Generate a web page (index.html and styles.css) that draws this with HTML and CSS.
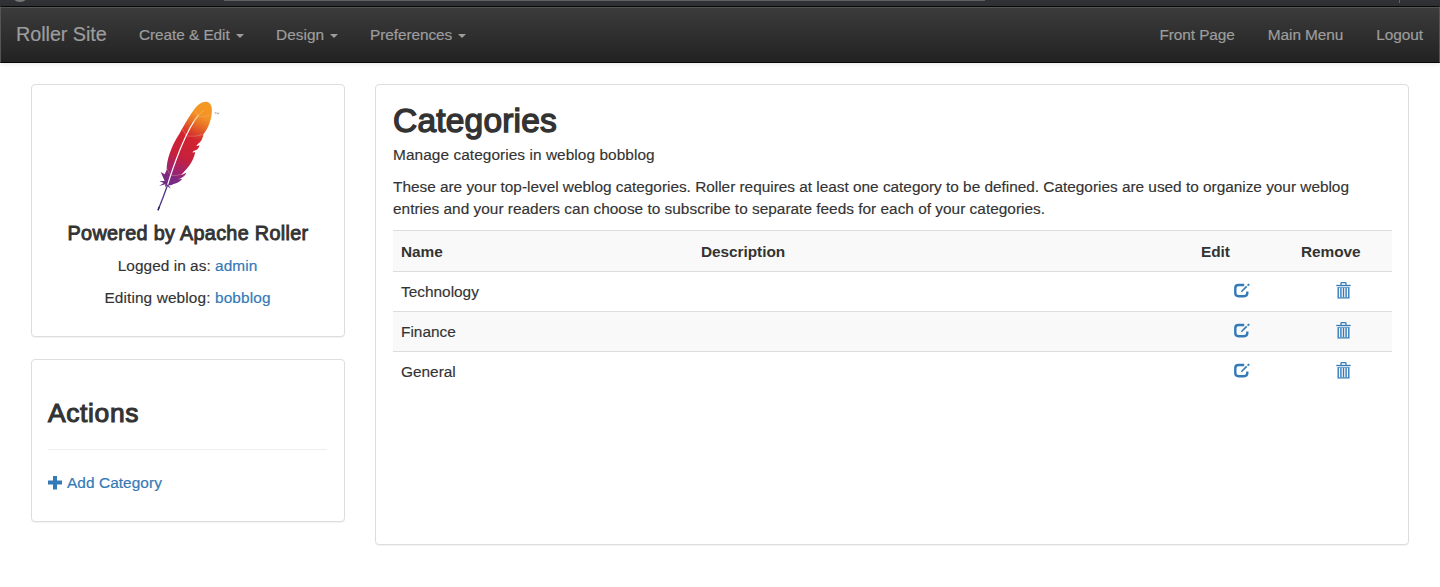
FILE: index.html
```html
<!DOCTYPE html>
<html lang="en">
<head>
<meta charset="utf-8">
<title>Roller Site</title>
<link rel="stylesheet" href="styles.css">
</head>
<body>
<svg class="defs" width="0" height="0" aria-hidden="true">
  <symbol id="edit" viewBox="0 0 16 15">
    <path d="M10.200 2H4.500Q1.300 2 1.300 5V10Q1.300 13.200 4.500 13.200H10Q13.300 13.200 13.300 10V8.400" fill="none" stroke="currentColor" stroke-width="2.400"/>
    <path d="M6.700 9.600 7.500 7.400 12.100 2.800 13.300 4 8.700 8.600ZM13 1.900 14.200.7Q15.800.5 15.600 2.100L14.300 3.200Z" fill="currentColor"/>
  </symbol>
  <symbol id="trash" viewBox="0 0 15 17">
    <path d="M5 3V1.200Q5 .6 5.600.6H9.400Q10 .6 10 1.200V3" fill="none" stroke="currentColor" stroke-width="1.200"/>
    <path d="M.3 3.500H14.700" stroke="currentColor" stroke-width="1.300"/>
    <path d="M1.600 5.400H13.400" stroke="currentColor" stroke-width="1" opacity=".75"/>
    <path d="M2.200 5.500V15.900H12.800V5.500M4.900 6V15M7.500 6V15M10.100 6V15" fill="none" stroke="currentColor" stroke-width="1.400"/>
  </symbol>
</svg>
<div class="chrome"><span class="knob"></span><span class="address"></span><span class="tick"></span></div>
<nav class="navbar">
  <a class="brand">Roller Site</a>
  <a class="n1">Create &amp; Edit<i class="caret"></i></a>
  <a class="n2">Design<i class="caret"></i></a>
  <a class="n3">Preferences<i class="caret"></i></a>
  <span class="right"><a>Front Page</a><a>Main Menu</a><a>Logout</a></span>
</nav>
<main class="layout">
  <aside class="side">
    <section class="card about">
      <svg class="feather" viewBox="-6 0 270 375">
        <defs><linearGradient id="plume" gradientUnits="userSpaceOnUse" x1="190" y1="38" x2="70" y2="290">
          <stop offset="0" stop-color="#f69923"/><stop offset=".16" stop-color="#f39324"/><stop offset=".27" stop-color="#e66a27"/><stop offset=".42" stop-color="#d2242f"/><stop offset=".65" stop-color="#c6203c"/><stop offset=".8" stop-color="#a4226a"/><stop offset=".9" stop-color="#7e2a82"/><stop offset="1" stop-color="#6d2c83"/>
        </linearGradient></defs>
        <path fill="url(#plume)" d="M181 35C198 34 203 53 200 72C198 91 189 118 174 134L175 134C174 139 176 136 173 142C171 150 166 157 159 161L154 168C160 168 165 164 163 169C160 177 154 182 147 182L142 187C149 188 152 184 150 190C145 211 133 230 119 243C115 248 111 252 108 255C116 253 121 248 124 248C119 260 110 264 98 268L112 267C105 275 96 280 86 282C79 286 72 287 70 284L78 296Q70 294 67 286L60 291L61 283L42 288L56 279L43 273L59 273L47 246L59 253L65 239C65 210 78 169 104 130C122 96 145 57 160 44Q171 35 181 35Z"/>
        <path d="M160 76C135 105 121 141 106 176C91 214 79 246 67 287" fill="none" stroke="#fff" stroke-width="3.600"/>
        <path d="M176 61C166 69 157 80 148 92" fill="none" stroke="#f7b45c" stroke-width="3"/>
        <path d="M68 284Q55 321 39 361" fill="none" stroke="#50398b" stroke-width="4"/>
        <path d="M43 350 39 361" stroke="#282052" stroke-width="4"/>
        <path d="M151 63 160 80Q182 81 199 75M113 117 124 138Q151 141 173 134M65 235 78 256Q94 258 109 253" fill="none" stroke="#efb6a5" stroke-width="1.300" opacity=".8"/>
        <path d="M208 68H214M211 68V73M216 73V68L218.500 72L221 68V73" fill="none" stroke="#888" stroke-width="1.300"/>
      </svg>
      <h4>Powered by Apache Roller</h4>
      <p>Logged in as: <a>admin</a></p>
      <p class="weblog">Editing weblog: <a>bobblog</a></p>
    </section>
    <section class="card actions">
      <h3>Actions</h3>
      <hr>
      <a class="add"><svg width="14" height="14" viewBox="0 0 14 14"><path d="M5 0H9V4.500H14V8.500H9V13.500H5V8.500H0V4.500H5Z" fill="currentColor"/></svg><span>Add Category</span></a>
    </section>
  </aside>
  <section class="card content">
    <h1>Categories</h1>
    <p class="sub">Manage categories in weblog bobblog</p>
    <p class="intro"><span class="first">These are your top-level weblog categories. Roller requires at least one category to be defined. Categories are used to organize your weblog</span><br><span>entries and your readers can choose to subscribe to separate feeds for each of your categories.</span></p>
    <table>
      <thead><tr><th class="name">Name</th><th class="desc">Description</th><th class="act">Edit</th><th class="last">Remove</th></tr></thead>
      <tbody>
        <tr><td>Technology</td><td></td><td class="icon"><svg class="edit"><use href="#edit"/></svg></td><td class="icon"><svg class="trash"><use href="#trash"/></svg></td></tr>
        <tr><td>Finance</td><td></td><td class="icon"><svg class="edit"><use href="#edit"/></svg></td><td class="icon"><svg class="trash"><use href="#trash"/></svg></td></tr>
        <tr><td>General</td><td></td><td class="icon"><svg class="edit"><use href="#edit"/></svg></td><td class="icon"><svg class="trash"><use href="#trash"/></svg></td></tr>
      </tbody>
    </table>
  </section>
</main>
</body>
</html>
```
FILE: styles.css
```css
* { box-sizing: border-box; }
body { margin: 0; height: 587px; overflow: hidden; background: #fff; color: #333; font: 15.4px/22px "Liberation Sans", Arial, sans-serif; letter-spacing: .05px; -webkit-text-stroke: .15px currentColor; }
h1, h3, h4, p { margin: 0; }
h1, h3, h4 { font-weight: 400; }
a { color: #337ab7; text-decoration: none; -webkit-text-stroke: .2px currentColor; }
.defs { display: block; }
.chrome { display: flex; height: 6px; background: #303134; overflow: hidden; }
.knob { width: 18px; height: 18px; margin: -16px 0 0 11px; border-radius: 9px; background: #777; }
.address { width: 761px; height: 1px; margin-left: 195px; background: #606163; }
.tick { width: 1px; height: 3px; margin-left: 414px; background: #606163; }
.navbar { display: flex; align-items: center; height: 57px; padding: 0 15px; border: solid #080808; border-width: 1px 0; border-left: 1px solid #555; border-right: 1px solid #555; background: linear-gradient(#3c3c3c, #222); box-shadow: inset 0 1px #555, 0 1px 5px rgba(0, 0, 0, .1); letter-spacing: -.07px; }
.navbar a { color: #9d9d9d; white-space: nowrap; }
.navbar .brand { width: 123px; font-size: 19.8px; line-height: 20px; padding-bottom: 1px; letter-spacing: -.05px; }
.n1 { width: 137px; }
.n2 { width: 94px; letter-spacing: .05px; }
.caret { display: inline-block; margin-left: 6px; vertical-align: 2px; border: 4px solid transparent; border-top-color: #9d9d9d; border-bottom: 0; }
.right { display: flex; gap: 33px; margin-left: auto; padding-right: 1px; }
.layout { display: flex; gap: 30px; padding: 21px 31px 0; align-items: flex-start; }
.side { display: grid; gap: 22px; width: 314px; }
.card { border: 1px solid #ddd; border-radius: 4px; background: #fff; box-shadow: 0 1px 1px rgba(0, 0, 0, .05); }
.about { height: 253px; padding-top: 5px; text-align: center; }
.feather { display: block; width: 90px; height: 125px; margin: 0 auto; }
.about h4 { margin: 7px 0 11px; font-size: 19.8px; letter-spacing: .32px; -webkit-text-stroke: .9px #333; }
.about p { margin-bottom: 10px; padding-right: 1px; }
.about .weblog { letter-spacing: .12px; }
.actions { height: 163px; padding: 38px 17px 0 16px; }
.actions h3 { font-size: 26.4px; line-height: 30px; letter-spacing: .65px; -webkit-text-stroke: 1.1px #333; }
.actions hr { height: 1px; margin: 21px 0 22px; border: 0; background: #eee; }
.add { display: flex; align-items: center; gap: 5px; letter-spacing: .07px; }
.content { width: 1034px; height: 461px; padding: 18px 16px 0 17px; }
.content h1 { height: 36px; font-size: 33.5px; line-height: 36px; letter-spacing: .2px; -webkit-text-stroke: 1.4px #333; }
.content .sub { margin: 5px 0 10px; letter-spacing: .07px; }
.intro { margin-bottom: 10px; white-space: nowrap; letter-spacing: .01px; }
.intro .first { letter-spacing: -.016px; }
table { width: 999px; table-layout: fixed; border-collapse: collapse; }
th, td { height: 40px; padding: 0 8px; border-top: 1px solid #ddd; text-align: left; }
td { letter-spacing: 0; }
th { height: 41px; padding-top: 2px; letter-spacing: -.05px; -webkit-text-stroke: 0; }
thead tr, tbody tr:nth-child(even) { background: #f9f9f9; }
.name { width: 300px; }
.desc { width: 500px; }
.act { width: 100px; }
.last { width: 99px; }
.icon { padding: 0 9px 0 7px; color: #337ab7; }
.icon:last-child { padding: 0 7px 0 8px; }
.icon svg { display: block; margin: 0 auto; }
.icon .edit { width: 16px; height: 15px; margin-top: -2px; }
.icon .trash { width: 15px; height: 17px; margin-top: -3px; }
```
